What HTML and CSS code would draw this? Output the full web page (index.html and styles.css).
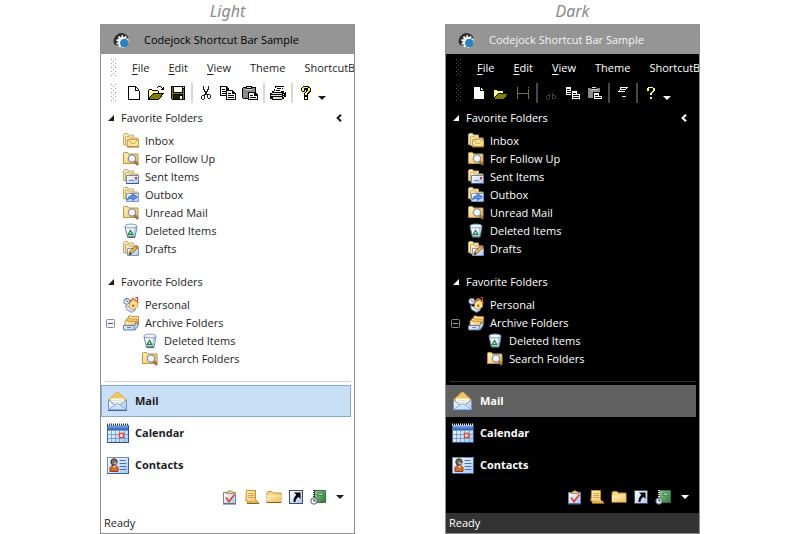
FILE: index.html
```html
<!DOCTYPE html>
<html lang="en">
<head>
<meta charset="utf-8">
<title>Codejock Shortcut Bar Sample</title>
<link rel="stylesheet" href="styles.css">
</head>
<body>
<main class="themes">

<section class="theme light">
  <h2 class="theme-name">Light</h2>
  <div class="window">
    <header class="titlebar"><svg class="icon"><use href="#app"/></svg><span>Codejock Shortcut Bar Sample</span></header>
    <nav class="menubar">
      <span class="grip"></span>
      <button><u>F</u>ile</button><button><u>E</u>dit</button><button><u>V</u>iew</button><button>Theme</button><button>ShortcutB</button>
    </nav>
    <div class="toolbar">
      <span class="grip"></span>
      <button aria-label="New"><svg class="icon"><use href="#new"/></svg></button>
      <button aria-label="Open"><svg class="icon"><use href="#open"/></svg></button>
      <button aria-label="Save"><svg class="icon"><use href="#save"/></svg></button>
      <span class="sep"></span>
      <button aria-label="Cut"><svg class="icon"><use href="#cut"/></svg></button>
      <button aria-label="Copy"><svg class="icon"><use href="#copy"/></svg></button>
      <button aria-label="Paste"><svg class="icon"><use href="#paste"/></svg></button>
      <span class="sep"></span>
      <button aria-label="Print"><svg class="icon"><use href="#print"/></svg></button>
      <span class="sep"></span>
      <button aria-label="Help"><svg class="icon"><use href="#help"/></svg></button>
      <button class="more" aria-label="Toolbar options"><svg class="caret"><use href="#caret"/></svg></button>
    </div>
    <div class="folders">
      <div class="group-head"><button class="group"><svg class="tri"><use href="#tri"/></svg>Favorite Folders</button><button class="collapse" aria-label="Collapse"><svg class="chev"><use href="#chev"/></svg></button></div>
      <ul class="tree">
        <li><a href="#"><svg class="icon"><use href="#inbox"/></svg>Inbox</a></li>
        <li><a href="#"><svg class="icon"><use href="#search"/></svg>For Follow Up</a></li>
        <li><a href="#"><svg class="icon"><use href="#sent"/></svg>Sent Items</a></li>
        <li><a href="#"><svg class="icon"><use href="#outbox"/></svg>Outbox</a></li>
        <li><a href="#"><svg class="icon"><use href="#search"/></svg>Unread Mail</a></li>
        <li><a href="#"><svg class="icon"><use href="#bin"/></svg>Deleted Items</a></li>
        <li><a href="#"><svg class="icon"><use href="#drafts"/></svg>Drafts</a></li>
      </ul>
      <div class="group-head"><button class="group"><svg class="tri"><use href="#tri"/></svg>Favorite Folders</button></div>
      <ul class="tree">
        <li><a href="#"><svg class="icon"><use href="#personal"/></svg>Personal</a></li>
        <li class="open"><button class="toggle" aria-label="Collapse Archive Folders"><svg class="minus"><use href="#minus"/></svg></button><a href="#"><svg class="icon"><use href="#archive"/></svg>Archive Folders</a>
          <ul>
            <li><a href="#"><svg class="icon"><use href="#bin"/></svg>Deleted Items</a></li>
            <li><a href="#"><svg class="icon"><use href="#search"/></svg>Search Folders</a></li>
          </ul>
        </li>
      </ul>
    </div>
    <nav class="shortcuts">
      <button class="active"><svg class="big"><use href="#mail"/></svg>Mail</button>
      <button><svg class="big"><use href="#calendar"/></svg>Calendar</button>
      <button><svg class="big"><use href="#contacts"/></svg>Contacts</button>
    </nav>
    <div class="mini">
      <button aria-label="Tasks"><svg class="icon"><use href="#tasks"/></svg></button>
      <button aria-label="Notes"><svg class="icon"><use href="#notes"/></svg></button>
      <button aria-label="Folder List"><svg class="icon"><use href="#folder"/></svg></button>
      <button aria-label="Shortcuts"><svg class="icon"><use href="#shortcut"/></svg></button>
      <button aria-label="Journal"><svg class="icon"><use href="#journal"/></svg></button>
      <button aria-label="Configure buttons"><svg class="caret"><use href="#caret"/></svg></button>
    </div>
    <footer class="status">Ready</footer>
  </div>
</section>

<section class="theme dark">
  <h2 class="theme-name">Dark</h2>
  <div class="window">
    <header class="titlebar"><svg class="icon"><use href="#app"/></svg><span>Codejock Shortcut Bar Sample</span></header>
    <nav class="menubar">
      <span class="grip"></span>
      <button><u>F</u>ile</button><button><u>E</u>dit</button><button><u>V</u>iew</button><button>Theme</button><button>ShortcutB</button>
    </nav>
    <div class="toolbar">
      <span class="grip"></span>
      <button aria-label="New"><svg class="icon"><use href="#new"/></svg></button>
      <button aria-label="Open"><svg class="icon"><use href="#open"/></svg></button>
      <button aria-label="Save"><svg class="icon"><use href="#save-dark"/></svg></button>
      <span class="sep"></span>
      <button aria-label="Cut"><svg class="icon"><use href="#cut-dark"/></svg></button>
      <button aria-label="Copy"><svg class="icon"><use href="#copy"/></svg></button>
      <button aria-label="Paste"><svg class="icon"><use href="#paste"/></svg></button>
      <span class="sep"></span>
      <button aria-label="Print"><svg class="icon"><use href="#print-dark"/></svg></button>
      <span class="sep"></span>
      <button aria-label="Help"><svg class="icon"><use href="#help"/></svg></button>
      <button class="more" aria-label="Toolbar options"><svg class="caret"><use href="#caret"/></svg></button>
    </div>
    <div class="folders">
      <div class="group-head"><button class="group"><svg class="tri"><use href="#tri"/></svg>Favorite Folders</button><button class="collapse" aria-label="Collapse"><svg class="chev"><use href="#chev"/></svg></button></div>
      <ul class="tree">
        <li><a href="#"><svg class="icon"><use href="#inbox"/></svg>Inbox</a></li>
        <li><a href="#"><svg class="icon"><use href="#search"/></svg>For Follow Up</a></li>
        <li><a href="#"><svg class="icon"><use href="#sent"/></svg>Sent Items</a></li>
        <li><a href="#"><svg class="icon"><use href="#outbox"/></svg>Outbox</a></li>
        <li><a href="#"><svg class="icon"><use href="#search"/></svg>Unread Mail</a></li>
        <li><a href="#"><svg class="icon"><use href="#bin"/></svg>Deleted Items</a></li>
        <li><a href="#"><svg class="icon"><use href="#drafts"/></svg>Drafts</a></li>
      </ul>
      <div class="group-head"><button class="group"><svg class="tri"><use href="#tri"/></svg>Favorite Folders</button></div>
      <ul class="tree">
        <li><a href="#"><svg class="icon"><use href="#personal"/></svg>Personal</a></li>
        <li class="open"><button class="toggle" aria-label="Collapse Archive Folders"><svg class="minus"><use href="#minus"/></svg></button><a href="#"><svg class="icon"><use href="#archive"/></svg>Archive Folders</a>
          <ul>
            <li><a href="#"><svg class="icon"><use href="#bin"/></svg>Deleted Items</a></li>
            <li><a href="#"><svg class="icon"><use href="#search"/></svg>Search Folders</a></li>
          </ul>
        </li>
      </ul>
    </div>
    <nav class="shortcuts">
      <button class="active"><svg class="big"><use href="#mail"/></svg>Mail</button>
      <button><svg class="big"><use href="#calendar"/></svg>Calendar</button>
      <button><svg class="big"><use href="#contacts"/></svg>Contacts</button>
    </nav>
    <div class="mini">
      <button aria-label="Tasks"><svg class="icon"><use href="#tasks"/></svg></button>
      <button aria-label="Notes"><svg class="icon"><use href="#notes"/></svg></button>
      <button aria-label="Folder List"><svg class="icon"><use href="#folder"/></svg></button>
      <button aria-label="Shortcuts"><svg class="icon"><use href="#shortcut"/></svg></button>
      <button aria-label="Journal"><svg class="icon"><use href="#journal"/></svg></button>
      <button aria-label="Configure buttons"><svg class="caret"><use href="#caret"/></svg></button>
    </div>
    <footer class="status">Ready</footer>
  </div>
</section>
</main>

<svg class="sprite" width="0" height="0" aria-hidden="true">
  <defs>
    <linearGradient id="gold" x1="0" y1="0" x2="1" y2="1"><stop offset="0" stop-color="#fff3c4"/><stop offset="1" stop-color="#edbc58"/></linearGradient>
    <linearGradient id="ice" x1="0" y1="0" x2="1" y2="1"><stop offset="0" stop-color="#ffffff"/><stop offset="1" stop-color="#a9c6ee"/></linearGradient>
    <linearGradient id="blue" x1="0" y1="0" x2="0" y2="1"><stop offset="0" stop-color="#8fb5ee"/><stop offset="1" stop-color="#2c5cb4"/></linearGradient>
    <linearGradient id="green" x1="0" y1="0" x2="1" y2="1"><stop offset="0" stop-color="#8cc790"/><stop offset="1" stop-color="#2f7a3c"/></linearGradient>
    <pattern id="dots" width="4" height="4" patternUnits="userSpaceOnUse"><path d="M0 0h1v1H0zM2 2h1v1H2z"/></pattern>
  </defs>

  <symbol id="app" viewBox="0 0 16 16">
    <path d="M1.500 12.500A7.600 7.600 0 1 1 15.600 5.400L13 6.500 3.800 13.600z" fill="#2b2e33"/>
    <circle cx="9.500" cy="9.500" r="4.800" fill="#fff"/>
    <circle cx="9.500" cy="9.500" r="5.400" fill="none" stroke="#fff" stroke-width="1.800" stroke-dasharray="1.700 1.690"/>
    <circle cx="11.300" cy="11" r="4.300" fill="#2583c4"/>
  </symbol>
  <symbol id="new" viewBox="0 0 16 16" shape-rendering="crispEdges">
    <path d="M3 2h7l3 3v9H3z" fill="#fff"/>
    <path d="M2 1h8v1H3v12h10V6h1v9H2zM9 2h1v3h3v1H9zM10 2h1v1h-1zM11 3h1v1h-1zM12 4h1v1h-1z" fill="#000"/>
  </symbol>
  <symbol id="open" viewBox="0 0 16 16" shape-rendering="crispEdges">
    <path d="M1 5h3v1h6v3H5l-4 4z" fill="#ffff88"/>
    <path d="M5 9h10l-4 5H1z" fill="#808000"/>
    <path d="M1 4h3v1H1zM4 5h6v1H4zM10 6h1v2h-1zM0 5h1v9H0zM5 8h11v1H5zM4 9h1v1H4zM3 10h1v1H3zM2 11h1v1H2zM1 12h1v2H1zM0 14h11v1H0zM14 9h1v1h-1zM13 10h1v2h-1zM12 12h1v1h-1zM11 13h1v1h-1zM9 2h1v1H9zM10 1h3v1h-3zM13 2h1v1h-1zM14 3h2v2h-3V4h1zM15 2h1v1h-1z" fill="#000"/>
  </symbol>
  <symbol id="save" viewBox="0 0 16 16" shape-rendering="crispEdges">
    <path d="M1 1h14v14H2l-1-1z" fill="#000"/><path d="M2 2h1v12H2zM13 4h1v10h-1zM3 8h10v1H3z" fill="#808000"/>
    <path d="M4 2h8v5H4z" fill="#fff"/><path d="M10 11h2v3h-2zM13 2h1v1h-1z" fill="#fff"/>
    <path d="M4 10h6v4H4z" fill="#202000"/>
  </symbol>
  <symbol id="save-dark" viewBox="0 0 16 16" shape-rendering="crispEdges">
    <path d="M2 2h1v12H2zM13 4h1v10h-1zM3 8h10v1H3zM13 2h1v1h-1z" fill="#77772a"/>
  </symbol>
  <symbol id="cut" viewBox="0 0 16 16" shape-rendering="crispEdges">
    <path d="M5 1h1v4H5zM10 1h1v4h-1zM6 4h1v3H6zM9 4h1v3H9zM7 6h2v4H7zM6 9h1v2H6zM9 9h1v1H9zM4 10h2v1H4zM3 11h1v3H3zM4 14h2v1H4zM6 11h1v3H6zM10 9h2v1h-2zM12 10h1v3h-1zM9 10h1v3H9zM10 13h2v1h-2z" fill="#202020"/>
  </symbol>
  <symbol id="cut-dark" viewBox="0 0 16 16" shape-rendering="crispEdges">
    <path d="M6 8h1v6H6zM4 10h2v1H4zM3 11h1v3H3zM4 14h2v1H4zM9 8h1v6H9zM10 10h2v1h-2zM12 11h1v2h-1zM10 13h2v1h-2z" fill="#404040"/>
  </symbol>
  <symbol id="copy" viewBox="0 0 16 16" shape-rendering="crispEdges">
    <path d="M0 1h6l3 3v7H0z" fill="#000"/><path d="M1 2h5v3h2v5H1z" fill="#fff"/>
    <path d="M2 4h3v1H2zM2 6h5v1H2zM2 8h5v1H2z" fill="#000"/>
    <path d="M6 5h6l4 4v6H6z" fill="#111"/><path d="M7 6h5v3h3v5H7z" fill="#fff"/>
    <path d="M8 8h3v1H8zM8 10h6v1H8zM8 12h6v1H8z" fill="#000"/>
  </symbol>
  <symbol id="paste" viewBox="0 0 16 16" shape-rendering="crispEdges">
    <path d="M1 2h13v12H1z" fill="#000"/><path d="M0 3h1v10H0z" fill="#000"/><path d="M1 3h12v10H1z" fill="#8b8b8b"/>
    <path d="M4 1h6v4H4z" fill="#000"/><path d="M5 2h4v1H5zM4 4h6v1H4z" fill="#ddd"/>
    <path d="M6 7h7l3 3v5H6z" fill="#000"/><path d="M7 8h5v3h3v3H7z" fill="#fff"/><path d="M8 10h3v1H8zM8 12h6v1H8z" fill="#000"/>
  </symbol>
  <symbol id="print" viewBox="0 0 16 16" shape-rendering="crispEdges">
    <path d="M5 1h9v1h-1v2h-1v2h2v1h2v5h-2v2h-2v1H2v-1H0V8h2V6h2V4h1z" fill="#000"/>
    <path d="M6 2h7l-2 5H4z" fill="#fff"/><path d="M7 3h4v1H7zM6 5h4v1H6z" fill="#000"/>
    <path d="M2 8h10v1H2zM1 10h11v1H1zM3 12h9v2H3z" fill="#e4e4e4"/><path d="M8 12h3v1H8z" fill="#dddd20"/><path d="M13 9h1v1h-1zM14 7h1v1h-1zM13 11h1v1h-1z" fill="#fff"/>
  </symbol>
  <symbol id="print-dark" viewBox="0 0 16 16" shape-rendering="crispEdges">
    <path d="M5 2h8v1h-1v1h-1v1h-1v2H3V6h1V5h1z" fill="#fff"/><path d="M6 3h5v1H6zM5 5h5v1H5z" fill="#000"/><path d="M7 11h4v1H7z" fill="#eeee78"/>
  </symbol>
  <symbol id="help" viewBox="0 0 16 16" shape-rendering="crispEdges">
    <path d="M5 1h6v1h1v1h1v4h-1v1h-1v1h-1v2H6V8h1V7h1V5H7v2H4V6H3V3h1V2h1zM6 11h4v4H6z" fill="#000"/>
    <path d="M5 2h5v1H5zM4 3h2v3H4zM10 3h2v3h-2zM9 6h2v1H9zM8 7h2v1H8zM7 8h2v2H7zM7 12h2v2H7z" fill="#ffff50"/>
  </symbol>
  <symbol id="caret" viewBox="0 0 8 4"><path d="M0 0h8L4 4z" fill="currentColor"/></symbol>
  <symbol id="tri" viewBox="0 0 6 6"><path d="M6 0v6H0z" fill="currentColor"/></symbol>
  <symbol id="chev" viewBox="0 0 6 8"><path d="M5 0.700 1.600 4 5 7.300" fill="none" stroke="currentColor" stroke-width="2"/></symbol>
  <symbol id="minus" viewBox="0 0 9 9"><rect x=".5" y=".5" width="8" height="8" rx="1" fill="var(--box)" stroke="#8a8a8a"/><path d="M2 4.500h5" stroke="var(--sign)"/></symbol>

  <symbol id="base" viewBox="0 0 16 16">
    <path d="M.5 11.500v-10l1-1h3l1 1.500h5v9.500z" fill="#f4e4b2" stroke="#c4ab74"/>
    <path d="M2.500 12.500V4l.5-.5h3L7 5h8v7.500z" fill="url(#gold)" stroke="#c9ac68"/>
  </symbol>
  <symbol id="inbox" viewBox="0 0 16 16"><use href="#base"/>
    <path d="M4.500 6.500h11v7h-11z" fill="#ffe9a8" stroke="#d1a243"/><path d="M5 7l5 4 5-4" fill="none" stroke="#d4a546"/><path d="M5 13l3.500-3M15 13l-3.500-3" fill="none" stroke="#e2bd6b" stroke-width=".8"/><path d="M4 14h12" stroke="#a37426"/>
  </symbol>
  <symbol id="search" viewBox="0 0 16 16">
    <path d="M.5 12.500V2l1-.5h3L5.500 3H15v9.500z" fill="url(#gold)" stroke="#bd9540"/>
    <path d="M11.500 10l3.500 4" stroke="#7c5526" stroke-width="2.600"/><path d="M12 10.500l2.500 3" stroke="#dfa455" stroke-width="1"/>
    <circle cx="9" cy="7.500" r="3.600" fill="#eef6ff" stroke="#8b8da4" stroke-width="1.200"/><path d="M7 8a2 2 0 0 1 2-2.500" fill="none" stroke="#fff"/>
  </symbol>
  <symbol id="sent" viewBox="0 0 16 16"><use href="#base"/>
    <path d="M3.500 6.500h12v8h-12z" fill="url(#ice)" stroke="#7186b6"/><path d="M12 8h2v2.500h-2z" fill="#d83b2d"/><path d="M6 11.500h5" stroke="#6d8cc8"/><path d="M3 14.500h13" stroke="#3b5795"/>
  </symbol>
  <symbol id="outbox" viewBox="0 0 16 16"><use href="#base"/>
    <path d="M3.500 6.500h12v8h-12z" fill="url(#ice)" stroke="#8197c3"/><path d="M4.500 13c.3-3 2-4.500 5-4.500v-2l5 3.500-5 3.500v-2c-2.500 0-4 .3-5 1.500z" fill="#5b91e4" stroke="#285caf" stroke-width=".7"/>
  </symbol>
  <symbol id="bin" viewBox="0 0 16 16">
    <path d="M2 3.500h12l-2 10.500H4.500z" fill="#f4f8fd" stroke="#667c9a"/><path d="M11 4h2.500l-2 9.500H10z" fill="#b4cdeb"/><ellipse cx="8" cy="3" rx="6" ry="1.900" fill="#eff6fc" stroke="#889bb2"/><path d="M4.500 14.200h7.500" stroke="#3e4f68" stroke-width="1.200"/>
    <path d="M7.500 7.500l2.300 4h-4.600z" fill="none" stroke="#168335" stroke-width="1.300"/>
  </symbol>
  <symbol id="drafts" viewBox="0 0 16 16"><use href="#base"/>
    <path d="M4.500 7.500h11v7h-11z" fill="url(#ice)" stroke="#8295bd"/><path d="M6 14l1-3.500 6-6 2 2-6 6z" fill="#f4b84e" stroke="#6c5332" stroke-width=".9"/><path d="M12 5.500l2 2 1.500-1.500-2-2z" fill="#ce6d5a"/><path d="M6 14l1-3 1.500 1.500z" fill="#333"/>
  </symbol>
  <symbol id="personal" viewBox="0 0 16 16">
    <path d="M2.500 8.500l4 1.500 7-1.500-1.500 5-3.500 2-5-3z" fill="url(#ice)" stroke="#697dae" stroke-width=".8"/>
    <path d="M6.500 6v5l4 1.500 4-2.500V5L12 2z" fill="#ffe4a0" stroke="#c88b31" stroke-width=".7"/><path d="M5.500 6.500L10 1.500l5.500 4.500" fill="none" stroke="#e47726" stroke-width="1.500"/><path d="M12.500.5h2V4" fill="none" stroke="#c6452d" stroke-width="1.200"/><path d="M9 7.500h2.500V10H9z" fill="#be8028"/>
    <circle cx="3.800" cy="4.300" r="3" fill="#edf3ff" stroke="#667092"/><path d="M3.800 2.500v2h1.500" fill="none" stroke="#434b6b" stroke-width=".8"/>
  </symbol>
  <symbol id="archive" viewBox="0 0 16 16">
    <path d="M5.500 7V1.500L8 .500l1 1h6.500v8z" fill="#ffe79b" stroke="#b57a24" stroke-width=".8"/>
    <path d="M3.500 8.500V4l2-1 1 1h7.500v6z" fill="#ffd978" stroke="#b57a24" stroke-width=".8"/>
    <path d="M2 11V6l1.500-.8 1.500 1h7.500v6z" fill="url(#gold)" stroke="#b57a24" stroke-width=".8"/>
    <path d="M.5 10.500h11l3.500-4v4.500l-3 4H.500z" fill="url(#ice)" stroke="#55719f" stroke-width=".9"/><path d="M11.500 10.500V15" stroke="#6783b0" stroke-width=".8"/><path d="M4 12.500h4" stroke="#6783b0"/>
  </symbol>

  <symbol id="mail" viewBox="1 1 23 23">
    <path d="M3 10.500L10.500 3.500h2l7.500 7v10H3z" fill="#f4c55c" stroke="#d9aa52"/>
    <path d="M5 9.500h13v7H5z" fill="#fffdf0"/><path d="M7 11.500h9M6 13.500h11" stroke="#d9dee8"/>
    <path d="M2.500 11l6.500 5h5l6.500-5v10h-18z" fill="url(#ice)" stroke="#7697c5"/>
    <path d="M3 20.500l7-5.500h3l7 5.500z" fill="#cfe2fb" stroke="#8fb0dd"/><path d="M2 21.500h19" stroke="#3e659f"/>
  </symbol>
  <symbol id="calendar" viewBox="1 1 23 23">
    <rect x="1.500" y="4.500" width="21" height="17" fill="url(#ice)" stroke="#416bb1"/><path d="M2 4h20v5H2z" fill="url(#blue)"/>
    <path d="M1 3.500h22" stroke="var(--spiral)" stroke-width="2" stroke-dasharray="1 1"/>
    <path d="M2 9.500h20M2 13.500h20M2 17.500h20M5.500 9v12M9.500 9v12M13.500 9v12M18.500 9v12" stroke="#7aa2dd"/>
    <path d="M13.500 12.500h4v4h-4z" fill="#fff" stroke="#dc4a2f" stroke-width="1.400"/><path d="M1 21.500h22M22.500 5v17" stroke="#264f99"/>
  </symbol>
  <symbol id="contacts" viewBox="1 1 23 23">
    <rect x="1.500" y="4.500" width="21" height="16" fill="url(#ice)" stroke="#6e8cba"/><path d="M1 20.500h22M22.500 5v16" stroke="#335fa8"/>
    <path d="M4 18.500v-4l2-2h4l2 2v4z" fill="#d56d29" stroke="#8b3d1c"/><path d="M7 12.500l1.500 2.500 1.500-2.500" fill="#fff"/><circle cx="8" cy="9" r="3.200" fill="#707070" stroke="#333"/><path d="M7.500 9.500h3v2h-2z" fill="#e6b18c"/>
    <path d="M13.500 7.500h6M13.500 10.500h7M13.500 13.500h7M13.500 16.500h7" stroke="#4574bd"/>
  </symbol>
  <symbol id="tasks" viewBox="0 0 16 16">
    <path d="M1.500 3.500h12v11h-12z" fill="url(#ice)" stroke="#7c82a0"/><path d="M1 15h13" stroke="#4d5c87"/><path d="M4 4.500l1.500-2H7L8 1l1 1.500h1.500l1.500 2z" fill="#f1cf91" stroke="#a77a40" stroke-width=".8"/><path d="M4 8.500l3 4 5.500-7" fill="none" stroke="#d64933" stroke-width="1.700"/>
  </symbol>
  <symbol id="notes" viewBox="0 0 16 16">
    <path d="M2.500 1.500h9v9l3.500 4-11-.500-2-2.500z" fill="url(#gold)" stroke="#c28b28"/><path d="M1 11l4 1.500h9.500M4 4.500h6M4 6.500h6M4 8.500h6" fill="none" stroke="#d39b36" stroke-width=".8"/><path d="M3 14.500h12" stroke="#8c6018"/>
  </symbol>
  <symbol id="folder" viewBox="0 0 16 16">
    <path d="M1 13V3.500l1-1h4L7.500 4h7.500v9z" fill="#f8d577" stroke="#be913d"/><path d="M1 6h14v7H1z" fill="url(#gold)"/><path d="M.5 13.500h15" stroke="#8b611b"/>
  </symbol>
  <symbol id="shortcut" viewBox="0 0 16 16">
    <rect x="1.500" y="1.500" width="13" height="13" fill="url(#ice)" stroke="#444b5b"/><path d="M6 3.500h6.500V10l-2.200-2.200C8.500 9.500 7.500 11 7.500 13H5.500c0-3 .8-5 2.800-7.200z" fill="#000"/>
  </symbol>
  <symbol id="journal" viewBox="0 0 16 16">
    <path d="M4.500 1.500h11v12h-11z" fill="url(#green)" stroke="#35713e"/><path d="M8 4h5v2.500H8z" fill="#a7d4a8" stroke="#39733f" stroke-width=".8"/><path d="M4 1v12" stroke="var(--spiral)" stroke-width="2" stroke-dasharray="1 1"/><circle cx="4" cy="12" r="3.200" fill="#f3f7ff" stroke="#595f72"/><path d="M4 10v2h1.800" fill="none" stroke="#26314c"/>
  </symbol>
</svg>
</body>
</html>
```
FILE: styles.css
```css
* { box-sizing: border-box; }

body {
  margin: 0;
  background: #fff;
  font-family: "Open Sans", "Noto Sans", sans-serif;
  font-size: 11px;
  line-height: 18px;
}

.themes {
  display: grid;
  grid-template-columns: 1fr 1fr;
  gap: 90px;
  padding: 0 100px;
}

.theme { min-width: 0; }

.light {
  --bg: #fff;
  --text: #1c1c1c;
  --title: #000;
  --grip: #a0a0a0;
  --sep: #d8d8d8;
  --rule: #c8d2d8;
  --active: #c9dff5;
  --active-edge: #86a9d6;
  --status: #fff;
  --box: #f4f6fa;
  --sign: #3c5288;
  --spiral: #333;
}

.dark {
  --bg: #000;
  --text: #fff;
  --title: #f4f4f4;
  --grip: #505050;
  --sep: #484848;
  --rule: #333;
  --active: #606060;
  --active-edge: #606060;
  --status: #333;
  --box: #000;
  --sign: #aaa;
  --spiral: #eee;
}

.theme-name {
  margin: 0;
  height: 24px;
  color: #888;
  font-family: "Noto Sans", "Open Sans", sans-serif;
  font-size: 16px;
  font-weight: 400;
  font-style: italic;
  line-height: 22px;
  text-align: center;
}

.window {
  border: 1px solid #8f8f8f;
  background: var(--bg);
  color: var(--text);
  overflow: hidden;
}

button {
  display: flex;
  align-items: center;
  justify-content: center;
  flex: none;
  margin: 0;
  padding: 0;
  border: 0;
  background: none;
  color: inherit;
  font: inherit;
  white-space: nowrap;
}

a { color: inherit; text-decoration: none; }
svg { display: block; flex: none; }
.icon { width: 16px; height: 16px; }
.big { width: 23px; height: 23px; }
.caret { width: 8px; height: 4px; }
.tri { width: 6px; height: 6px; }
.chev { width: 6px; height: 8px; }
.minus { width: 9px; height: 9px; }

.titlebar {
  display: flex;
  align-items: center;
  gap: 15px;
  height: 29px;
  padding-left: 12px;
  background: #959595;
  color: var(--title);
  white-space: nowrap;
}

/* Two staggered grids of single dots form the drag handle. */
.grip {
  flex: none;
  width: 6px;
  height: 18px;
  background-image:
    conic-gradient(from 270deg at 1px 1px, var(--grip) 90deg, transparent 0),
    conic-gradient(from 270deg at 1px 1px, var(--grip) 90deg, transparent 0);
  background-size: 4px 4px;
  background-position: 0 0, 2px 2px;
}

.menubar {
  display: flex;
  align-items: center;
  gap: 1px;
  height: 28px;
  padding-left: 10px;
}
.menubar button { display: block; padding: 0 9px; }
.menubar .grip { margin-right: 5px; }
.menubar u { text-underline-offset: 2px; }

.toolbar {
  display: flex;
  align-items: center;
  height: 22px;
  padding-left: 10px;
}
.toolbar .grip { margin-right: 6px; }
.toolbar button { width: 22px; height: 22px; }
.toolbar .more { width: 10px; align-items: flex-end; padding-bottom: 4px; }
.sep {
  flex: none;
  width: 2px;
  height: 20px;
  margin: 0 2px;
  background: var(--sep);
}

.group-head {
  display: flex;
  align-items: center;
  justify-content: space-between;
  height: 28px;
  padding: 0 12px 0 7px;
}
.group { gap: 7px; }
.tree + .group-head { margin-top: 10px; }

.folders { padding-bottom: 13px; }
.tree, .tree ul { margin: 0; padding: 0; list-style: none; }
.tree { padding-left: 22px; }
.tree ul { padding-left: 19px; }
.tree a { display: flex; align-items: center; gap: 6px; height: 18px; }
.tree .open { display: grid; grid-template-columns: 17px 1fr; margin-left: -17px; align-items: center; }
.tree .open ul { grid-column: 2; }
.toggle { justify-content: flex-start; }

.shortcuts { padding: 0 3px 0 0; }
.shortcuts::before {
  content: "";
  display: block;
  height: 1px;
  margin: 0 0 3px 4px;
  background: var(--rule);
}
.shortcuts button {
  justify-content: flex-start;
  gap: 5px;
  width: 100%;
  height: 32px;
  padding-left: 5px;
  border: 1px solid transparent;
  font-weight: 700;
}
.shortcuts .active { background: var(--active); border-color: var(--active-edge); }

.mini {
  display: flex;
  justify-content: flex-end;
  height: 32px;
  padding-right: 3px;
}
.mini button { width: 22px; }

.status {
  height: 20px;
  padding: 1px 3px;
  background: var(--status);
}
```
